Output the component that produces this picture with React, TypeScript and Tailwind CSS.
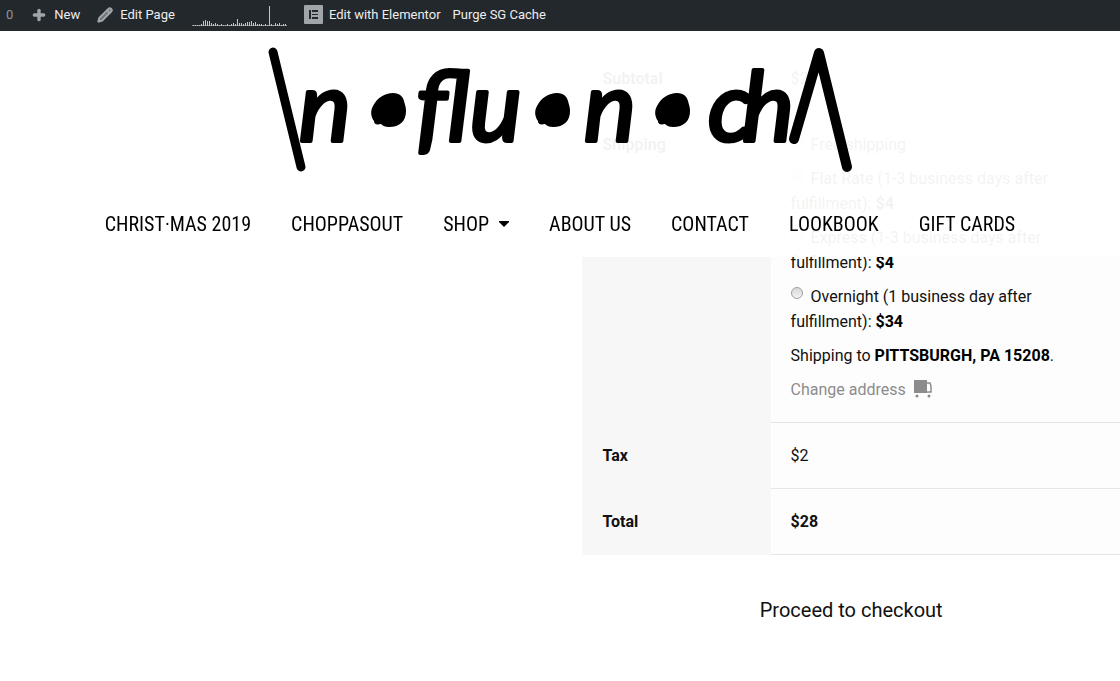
import { Plus, Pencil } from "lucide-react";

const menu = [
  { label: "CHRIST·MAS 2019", href: "#christmas" },
  { label: "CHOPPASOUT", href: "#choppasout" },
  { label: "SHOP", href: "#shop", dropdown: true },
  { label: "ABOUT US", href: "#about" },
  { label: "CONTACT", href: "#contact" },
  { label: "LOOKBOOK", href: "#lookbook" },
  { label: "GIFT CARDS", href: "#gift-cards" },
];

const shippingMethods = [
  { id: "free", label: "Free shipping", price: "" },
  { id: "flat", label: "Flat Rate (1-3 business days after fulfillment):", price: "$4" },
  { id: "express", label: "Express (1-3 business days after fulfillment):", price: "$4" },
  { id: "overnight", label: "Overnight (1 business day after fulfillment):", price: "$34" },
];

const stats = [1, 1, 1, 1, 2, 5, 6, 5, 5, 3, 2, 3, 2, 1, 2, 1, 1, 2, 1, 2, 3, 2, 7, 3, 3, 2, 3, 4, 4, 5, 3, 4, 2, 2, 2, 1, 2, 1, 20, 2, 1, 3, 2, 3, 1, 2, 2];

function StatsChart() {
  return (
    <svg width="96" height="24" viewBox="0 0 96 24" aria-hidden="true">
      <rect x="0" y="22" width="95" height="1" fill="#7d8287" />
      {stats.map((value, i) => (
        <rect key={i} x={1 + i * 2} y={23 - value} width="1" height={value} fill="#c3c6c9" />
      ))}
    </svg>
  );
}

function AdminBar() {
  return (
    <div className="fixed inset-x-0 top-0 z-20 flex h-[31px] items-center bg-[#23282d] pb-[2px] pl-[6px] font-[Roboto,sans-serif] text-[13px] leading-5 text-[#eeeeee]">
      <a href="#comments" className="mr-[18px] text-[#8d9297]">0</a>
      <a href="#new" className="mr-[17px] flex items-center gap-[7px]">
        <Plus className="h-4 w-4 text-[#a0a5aa]" strokeWidth={5} />
        New
      </a>
      <a href="#edit" className="mr-[17px] flex items-center gap-[7px]">
        <Pencil className="h-4 w-4 fill-[#6c7176] text-[#a0a5aa]" strokeWidth={3} />
        Edit Page
      </a>
      <a href="#stats" className="mr-4" aria-label="Stats">
        <StatsChart />
      </a>
      <a href="#elementor" className="mr-3 flex items-center gap-[6px]">
        <svg width="19" height="19" viewBox="0 0 19 19" aria-hidden="true">
          <rect width="19" height="19" rx="1" fill="#a0a5aa" />
          <path d="M5 5h2v9H5zM8 5h6v2H8zM8 9h6v1H8zM8 12h6v2H8z" fill="#23282d" />
        </svg>
        Edit with Elementor
      </a>
      <a href="#purge">Purge SG Cache</a>
    </div>
  );
}

function Logo() {
  const dot = "M35 18C35 28 29 34 18 34C14 34 12 33 10 31C5 32 3 31 3 28C0 24 -1 18 2 13C6 5 14 0 22 0C29 0 32 4 33 8C34 12 35 14 35 18Z";
  return (
    <svg width="584" height="128" viewBox="0 0 584 128" role="img" aria-label="influencha" className="overflow-visible">
      <g fill="none" stroke="#000" strokeWidth="9" strokeLinecap="round" strokeLinejoin="round">
        <path d="M5 5L33 120" />
        <path d="M526 92L551 6L579 120" strokeWidth="10" />
      </g>
      <path d={dot} transform="translate(103 46)" />
      <path d={dot} transform="translate(267 46)" />
      <path d={dot} transform="translate(387 46)" />
      <g
        className="font-[Lato,sans-serif] text-[98px] italic"
        stroke="#000"
        strokeWidth="4"
        strokeLinejoin="round"
      >
        <text x="31" y="94">n</text>
        <text x="148" y="94">flu</text>
        <text x="316" y="94">n</text>
        <text x="440" y="94">c</text>
        <text x="474" y="94">h</text>
      </g>
    </svg>
  );
}

function Header() {
  return (
    <header className="fixed inset-x-0 top-[31px] z-10 flex flex-col items-center bg-white/95 pt-4">
      <a href="#home"><Logo /></a>
      <nav className="mt-4 flex h-[66px] items-center justify-center gap-10 font-['Roboto_Condensed',sans-serif] text-[20px] leading-8 text-black">
        {menu.map((item) => (
          <a key={item.label} href={item.href} className="flex items-center gap-[10px] whitespace-nowrap">
            {item.label}
            {item.dropdown && (
              <svg width="10" height="6" viewBox="0 0 10 6" aria-hidden="true">
                <path d="M0 0H10V1L5 6L0 1Z" />
              </svg>
            )}
          </a>
        ))}
      </nav>
    </header>
  );
}

function TruckIcon() {
  return (
    <svg width="19" height="18" viewBox="0 0 19 18" className="mb-1 ml-2 inline-block" aria-hidden="true">
      <path d="M0 0H13V13H0Z" fill="#8c8c8c" />
      <path d="M13 3H16L17 6V12H13" fill="none" stroke="#8c8c8c" strokeWidth="1.5" />
      <circle cx="3" cy="16" r="1.5" fill="#8c8c8c" />
      <circle cx="15" cy="16" r="1.5" fill="#8c8c8c" />
    </svg>
  );
}

function CartTotals() {
  const th = "w-[35%] bg-[#f7f7f7] px-5 pt-5 pb-[21px] text-left align-top font-bold";
  const td = "border-b border-[#e6e6e6] bg-[#fdfdfd] px-5 py-5 align-top";

  return (
    <table className="w-full table-fixed border-separate border-spacing-0 text-[16px] leading-[25px]">
      <tbody>
        <tr>
          <th scope="row" className={th}>Subtotal</th>
          <td className={td}>$22</td>
        </tr>
        <tr>
          <th scope="row" className={th}>Shipping</th>
          <td className={td}>
            <ul>
              {shippingMethods.map((method) => (
                <li key={method.id} className="mb-[9px]">
                  <input
                    type="radio"
                    id={method.id}
                    name="shipping_method"
                    defaultChecked={method.id === "flat"}
                    className="mr-2 h-3 w-3 appearance-none rounded-full border border-[#a0a0a0] bg-linear-to-b from-[#d8d8d8] to-[#f2f2f2] align-[3px]"
                  />
                  <label htmlFor={method.id}>{method.label}</label>{" "}
                  {method.price && <strong className="text-black">{method.price}</strong>}
                </li>
              ))}
            </ul>
            <p className="mb-[9px]">
              Shipping to <strong className="text-black">PITTSBURGH, PA 15208</strong>.
            </p>
            <a href="#change-address" className="block h-[25px] text-[#8c8c8c]">
              Change address
              <TruckIcon />
            </a>
          </td>
        </tr>
        <tr>
          <th scope="row" className={th}>Tax</th>
          <td className={td}>$2</td>
        </tr>
        <tr>
          <th scope="row" className={th}>Total</th>
          <td className={td}><strong>$28</strong></td>
        </tr>
      </tbody>
    </table>
  );
}

export default function App() {
  return (
    <div className="min-h-screen bg-white font-[Roboto,sans-serif] text-[#111111]">
      <AdminBar />
      <Header />
      <main className="flex justify-end pt-[46px]">
        <section className="w-[48%]">
          <CartTotals />
          <a href="#checkout" className="mt-[39px] block text-center text-[20px] leading-8">
            Proceed to checkout
          </a>
        </section>
      </main>
    </div>
  );
}
